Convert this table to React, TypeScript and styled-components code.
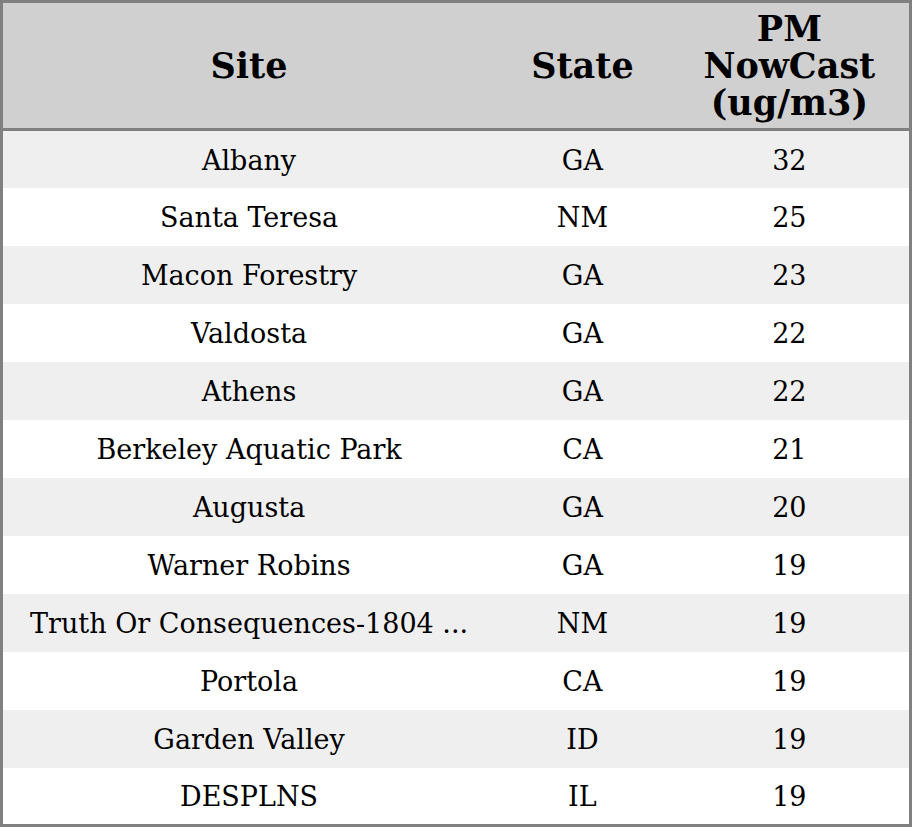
import React from "react";
import styled, { createGlobalStyle } from "styled-components";

const Global = createGlobalStyle`
  html, body { margin: 0; padding: 0; background: #ffffff; }
  body { font-family: "DejaVu Serif", serif; }
`;

const Table = styled.table`
  width: 912px;
  height: 827px;
  border-collapse: collapse;
  border: 3px solid #808080;
  font-family: "DejaVu Serif", serif;
  color: #000;
  table-layout: fixed;
`;

const Col = styled.col<{ $w: number }>`
  width: ${(p) => p.$w}px;
`;

const HeadRow = styled.tr`
  background: #d0d0d0;
  height: 128px;
  border-bottom: 3px solid #808080;
`;

const Th = styled.th`
  font-size: 35px;
  font-weight: bold;
  line-height: 37px;
  padding: 0 12px;
  text-align: center;
  vertical-align: middle;
`;

const Row = styled.tr<{ $alt: boolean }>`
  background: ${(p) => (p.$alt ? "#efefef" : "#ffffff")};
  height: 58px;
`;

const Td = styled.td`
  font-size: 27px;
  text-align: center;
  vertical-align: middle;
  padding: 2px 0 0 0;
  white-space: nowrap;
`;

const rows: [string, string, number][] = [
  ["Albany", "GA", 32],
  ["Santa Teresa", "NM", 25],
  ["Macon Forestry", "GA", 23],
  ["Valdosta", "GA", 22],
  ["Athens", "GA", 22],
  ["Berkeley Aquatic Park", "CA", 21],
  ["Augusta", "GA", 20],
  ["Warner Robins", "GA", 19],
  ["Truth Or Consequences-1804 ...", "NM", 19],
  ["Portola", "CA", 19],
  ["Garden Valley", "ID", 19],
  ["DESPLNS", "IL", 19],
];

export default function App() {
  return (
    <>
      <Global />
      <Table>
        <colgroup>
          <Col $w={492} />
          <Col $w={174} />
          <Col $w={240} />
        </colgroup>
        <thead>
          <HeadRow>
            <Th>Site</Th>
            <Th>State</Th>
            <Th>PM NowCast (ug/m3)</Th>
          </HeadRow>
        </thead>
        <tbody>
          {rows.map(([site, st, v], i) => (
            <Row key={i} $alt={i % 2 === 0}>
              <Td>{site}</Td>
              <Td>{st}</Td>
              <Td>{v}</Td>
            </Row>
          ))}
        </tbody>
      </Table>
    </>
  );
}
